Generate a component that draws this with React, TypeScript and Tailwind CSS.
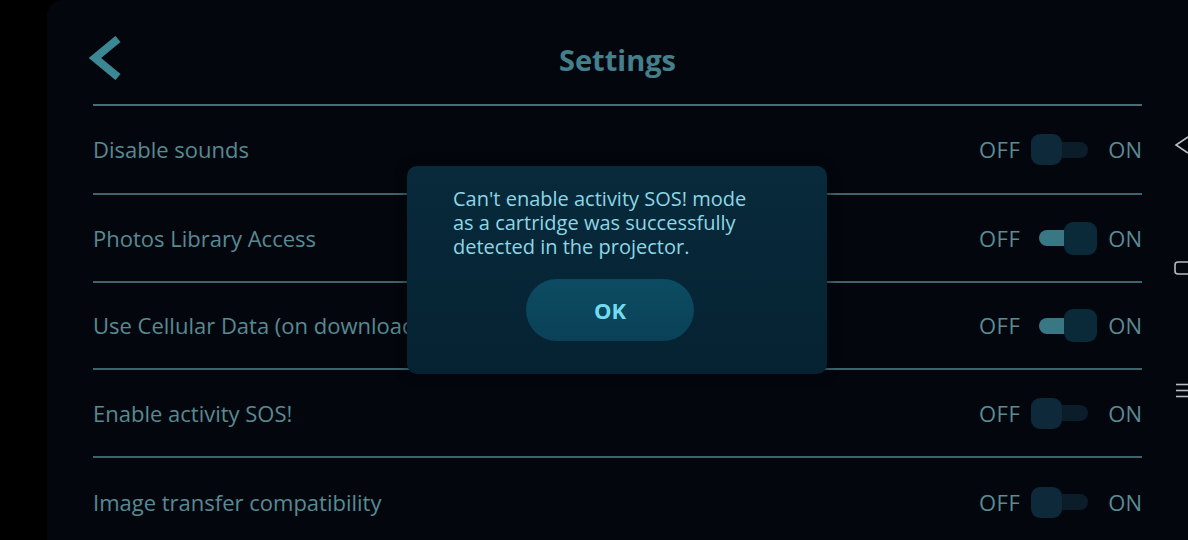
import React from "react";

type Row = { label: string; on: boolean; h: string };

const rows: Row[] = [
  { label: "Disable sounds", on: false, h: "h-[89px]" },
  { label: "Photos Library Access", on: true, h: "h-[88px]" },
  { label: "Use Cellular Data (on downloads)", on: true, h: "h-[87px]" },
  { label: "Enable activity SOS!", on: false, h: "h-[88px]" },
  { label: "Image transfer compatibility", on: false, h: "h-[88px]" },
];

function Toggle({ on }: { on: boolean }) {
  if (on) {
    return (
      <div className="flex w-[66px] items-center">
        <div className="ml-[8px] h-[16px] w-[27px] rounded-l-[8px] bg-[#3a7784]" />
        <div className="-ml-[2px] h-[33px] w-[33px] rounded-[9px] bg-[#0b2a39]" />
      </div>
    );
  }
  return (
    <div className="flex w-[66px] items-center">
      <div className="h-[31px] w-[31px] rounded-[9px] bg-[#0e2a3a]" />
      <div className="h-[16px] w-[26px] rounded-r-[8px] bg-[#0a1d28]" />
    </div>
  );
}

function SettingRow({ row, last }: { row: Row; last: boolean }) {
  return (
    <div
      className={`flex ${row.h} items-center justify-between ${
        last ? "" : "border-b-2 border-[#3d646d]"
      }`}
    >
      <span className="whitespace-nowrap text-[22px] text-[#578a93]">{row.label}</span>
      <div className="flex items-center gap-[11px] text-[22px] text-[#5a8c95]">
        <span className="tracking-[0.5px]">OFF</span>
        <Toggle on={row.on} />
        <span>ON</span>
      </div>
    </div>
  );
}

export default function App() {
  return (
    <div
      className="flex h-[540px] w-[1188px] overflow-hidden bg-black"
      style={{ fontFamily: '"Open Sans", "DejaVu Sans", sans-serif' }}
    >
      <div className="w-[47px] shrink-0 bg-black" />
      <div className="relative flex-1 overflow-hidden rounded-tl-[16px] bg-[#03070d] px-[46px]">
        {/* header */}
        <div className="relative flex h-[106px] items-center justify-center border-b-2 border-[#466c75]">
          <svg
            className="absolute left-[-6px] top-[36px]"
            width="36"
            height="44"
            viewBox="0 0 36 44"
          >
            <polyline
              points="31,3 8,22 31,41"
              fill="none"
              stroke="#3b8794"
              strokeWidth="8"
              strokeLinejoin="miter"
            />
          </svg>
          <h1 className="mt-[16px] text-[29px] font-bold text-[#44808b]">Settings</h1>
        </div>

        {rows.map((r, i) => (
          <SettingRow key={r.label} row={r} last={i === rows.length - 1} />
        ))}

        {/* dialog */}
        <div className="absolute left-[360px] top-[166px] h-[208px] w-[420px] rounded-[10px] bg-gradient-to-b from-[#082a3b] to-[#052232] pl-[46px] pr-[30px] pt-[21px] shadow-[0_0_12px_rgba(0,0,0,0.6)]">
          <p className="text-[20px] leading-[24px] text-[#8cd7e6]">
            Can't enable activity SOS! mode
            <br />
            as a cartridge was successfully
            <br />
            detected in the projector.
          </p>
          <div className="mt-[20px] flex pl-[73px]">
            <button className="flex h-[62px] w-[168px] items-center justify-center rounded-full bg-gradient-to-b from-[#0c4c62] to-[#0a4157] text-[22px] font-bold text-[#72dbee]">
              OK
            </button>
          </div>
        </div>

        {/* system nav buttons */}
        <svg className="absolute right-0 top-[136px]" width="14" height="18" viewBox="0 0 14 18">
          <polyline points="14,1 2,9 14,17" fill="none" stroke="#b8bcc0" strokeWidth="1.6" />
        </svg>
        <svg className="absolute right-0 top-[261px]" width="14" height="14" viewBox="0 0 14 14">
          <rect x="1" y="1" width="20" height="12" rx="3" fill="none" stroke="#b8bcc0" strokeWidth="1.6" />
        </svg>
        <svg className="absolute right-0 top-[383px]" width="14" height="15" viewBox="0 0 14 15">
          <line x1="2" y1="1.5" x2="14" y2="1.5" stroke="#b8bcc0" strokeWidth="1.6" />
          <line x1="2" y1="7.5" x2="14" y2="7.5" stroke="#b8bcc0" strokeWidth="1.6" />
          <line x1="2" y1="13.5" x2="14" y2="13.5" stroke="#b8bcc0" strokeWidth="1.6" />
        </svg>
      </div>
    </div>
  );
}
